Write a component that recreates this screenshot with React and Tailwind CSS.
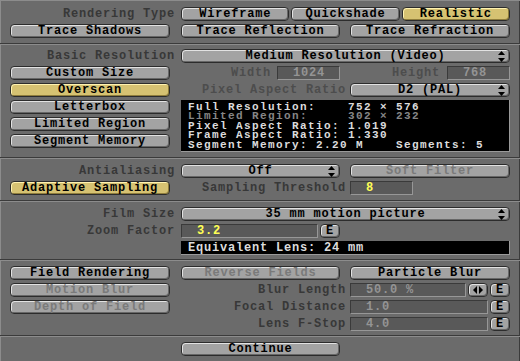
import React from "react";

const faces = {
  normal:
    "bg-[#a3a3a3] text-black shadow-[inset_1px_1px_0_#e2e2e2,inset_-1px_-1px_0_#676767]",
  yellow:
    "bg-[#d6c272] text-black shadow-[inset_1px_1px_0_#fff2b0,inset_-1px_-1px_0_#8f7d3c]",
  disabled:
    "bg-[#a3a3a3] text-[#7a7a7a] shadow-[inset_1px_1px_0_#e2e2e2,inset_-1px_-1px_0_#676767]",
};

const Btn = ({ children, tone = "normal", className = "" }) => (
  <div
    className={`h-[14px] rounded-[4px] border border-[#2c2c2c] flex items-center justify-center leading-none whitespace-nowrap ${faces[tone]} ${className}`}
  >
    {children}
  </div>
);

const UpDown = () => (
  <svg width="7" height="11" viewBox="0 0 7 11" className="shrink-0">
    <polygon points="0,4 3.5,0 7,4" fill="#000" />
    <polygon points="0,7 3.5,11 7,7" fill="#000" />
  </svg>
);

const Dropdown = ({ children }) => (
  <div
    className={`relative h-[14px] rounded-[4px] border border-[#2c2c2c] flex items-center justify-center leading-none whitespace-nowrap ${faces.normal}`}
  >
    <span>{children}</span>
    <span className="absolute right-[4px] top-[1px]">
      <UpDown />
    </span>
  </div>
);

const Field = ({ children, yellow, className = "" }) => (
  <div
    className={`h-[14px] bg-[#595959] border-t border-l border-[#3a3a3a] border-b-[#979797] border-r-[#979797] border-b border-r flex items-center pl-[15px] leading-none whitespace-nowrap ${
      yellow ? "text-[#ffff55]" : "text-[#949494]"
    } ${className}`}
  >
    {children}
  </div>
);

const Label = ({ children, dim, className = "" }) => (
  <div
    className={`h-[14px] flex items-center justify-end whitespace-nowrap leading-none ${
      dim ? "text-[#4d4d4d]" : "text-[#383838]"
    } ${className}`}
  >
    {children}
  </div>
);

const EBtn = () => <Btn className="w-[20px] shrink-0">E</Btn>;

const Section = ({ children, className = "" }) => (
  <div
    className={`border-t border-[#8c8c8c] border-b border-b-[#3b3b3b] px-[10px] flex flex-col gap-[3px] ${className}`}
  >
    {children}
  </div>
);

const Row = ({ left, children }) => (
  <div className="grid grid-cols-[160px_329px] gap-x-[11px] items-start">
    <div>{left}</div>
    <div>{children}</div>
  </div>
);

const Split = ({ children }) => (
  <div className="grid grid-cols-[159px_160px] gap-x-[10px]">{children}</div>
);

export default function App() {
  return (
    <div className="w-[520px] h-[361px] overflow-hidden bg-[#6b6b6b] font-['Liberation_Mono',monospace] font-bold text-[12px] tracking-[0.8px] shadow-[inset_1px_0_0_#8c8c8c,inset_-1px_0_0_#3b3b3b]">
      <Section className="pt-[6px] pb-[5px]">
        <Row left={<Label className="-mr-[5px]">Rendering Type</Label>}>
          <div className="grid grid-cols-3 gap-x-[2px]">
            <Btn>Wireframe</Btn>
            <Btn>Quickshade</Btn>
            <Btn tone="yellow">Realistic</Btn>
          </div>
        </Row>
        <Row left={<Btn>Trace Shadows</Btn>}>
          <Split>
            <Btn>Trace Reflection</Btn>
            <Btn>Trace Refraction</Btn>
          </Split>
        </Row>
      </Section>

      <Section className="pt-[4px] pb-[5px]">
        <Row left={<Label className="-mr-[5px]">Basic Resolution</Label>}>
          <Dropdown>Medium Resolution (Video)</Dropdown>
        </Row>
        <Row left={<Btn>Custom Size</Btn>}>
          <Split>
            <div className="flex items-center justify-end gap-[6px]">
              <Label dim>Width</Label>
              <Field className="w-[63px]">1024</Field>
            </div>
            <div className="flex items-center justify-end gap-[7px]">
              <Label dim>Height</Label>
              <Field className="w-[63px]">768</Field>
            </div>
          </Split>
        </Row>
        <Row left={<Btn tone="yellow">Overscan</Btn>}>
          <Split>
            <Label dim className="-mr-[6px]">Pixel Aspect Ratio</Label>
            <Dropdown>D2 (PAL)</Dropdown>
          </Split>
        </Row>
        <Row
          left={
            <div className="flex flex-col gap-[3px]">
              <Btn>Letterbox</Btn>
              <Btn>Limited Region</Btn>
              <Btn>Segment Memory</Btn>
            </div>
          }
        >
          <div className="h-[52px] bg-black border-b border-r border-[#9a9a9a] px-[7px] pt-[3px] text-[#dcdcdc] text-[11px] tracking-[1.4px] leading-[9.4px] whitespace-pre">
            <div>Full Resolution:    752 × 576</div>
            <div className="text-[#868686]">Limited Region:     302 × 232</div>
            <div>Pixel Aspect Ratio: 1.019</div>
            <div>Frame Aspect Ratio: 1.330</div>
            <div>Segment Memory: 2.20 M    Segments: 5</div>
          </div>
        </Row>
      </Section>

      <Section className="pt-[5px] pb-[5px]">
        <Row left={<Label className="-mr-[5px]">Antialiasing</Label>}>
          <Split>
            <Dropdown>Off</Dropdown>
            <Btn tone="disabled">Soft Filter</Btn>
          </Split>
        </Row>
        <Row left={<Btn tone="yellow">Adaptive Sampling</Btn>}>
          <Split>
            <Label className="-mr-[6px]">Sampling Threshold</Label>
            <Field yellow className="w-[63px]">8</Field>
          </Split>
        </Row>
      </Section>

      <Section className="pt-[5px] pb-[4px]">
        <Row left={<Label className="-mr-[5px]">Film Size</Label>}>
          <Dropdown>35 mm motion picture</Dropdown>
        </Row>
        <Row left={<Label className="-mr-[5px]">Zoom Factor</Label>}>
          <Split>
            <div className="flex gap-[2px]">
              <Field yellow className="flex-1">3.2</Field>
              <EBtn />
            </div>
          </Split>
        </Row>
        <Row>
          <div className="h-[14px] bg-black border-b border-r border-[#9a9a9a] px-[7px] flex items-center text-[#dcdcdc] leading-none whitespace-pre">
            Equivalent Lens: 24 mm
          </div>
        </Row>
      </Section>

      <Section className="pt-[5px] pb-[4px]">
        <Row left={<Btn>Field Rendering</Btn>}>
          <Split>
            <Btn tone="disabled">Reverse Fields</Btn>
            <Btn>Particle Blur</Btn>
          </Split>
        </Row>
        <Row left={<Btn tone="disabled">Motion Blur</Btn>}>
          <Split>
            <Label className="-mr-[6px]">Blur Length</Label>
            <div className="flex gap-[2px]">
              <Field className="flex-1">50.0 %</Field>
              <Btn className="w-[20px] shrink-0">
                <svg width="10" height="8" viewBox="0 0 10 8">
                  <polygon points="4,0 4,8 0,4" fill="#000" />
                  <polygon points="6,0 6,8 10,4" fill="#000" />
                </svg>
              </Btn>
              <EBtn />
            </div>
          </Split>
        </Row>
        <Row left={<Btn tone="disabled">Depth of Field</Btn>}>
          <Split>
            <Label className="-mr-[6px]">Focal Distance</Label>
            <div className="flex gap-[2px]">
              <Field className="flex-1">1.0</Field>
              <EBtn />
            </div>
          </Split>
        </Row>
        <Row>
          <Split>
            <Label className="-mr-[6px]">Lens F-Stop</Label>
            <div className="flex gap-[2px]">
              <Field className="flex-1">4.0</Field>
              <EBtn />
            </div>
          </Split>
        </Row>
      </Section>

      <Section className="pt-[5px] pb-[6px]">
        <Row>
          <Split>
            <Btn>Continue</Btn>
          </Split>
        </Row>
      </Section>
    </div>
  );
}
